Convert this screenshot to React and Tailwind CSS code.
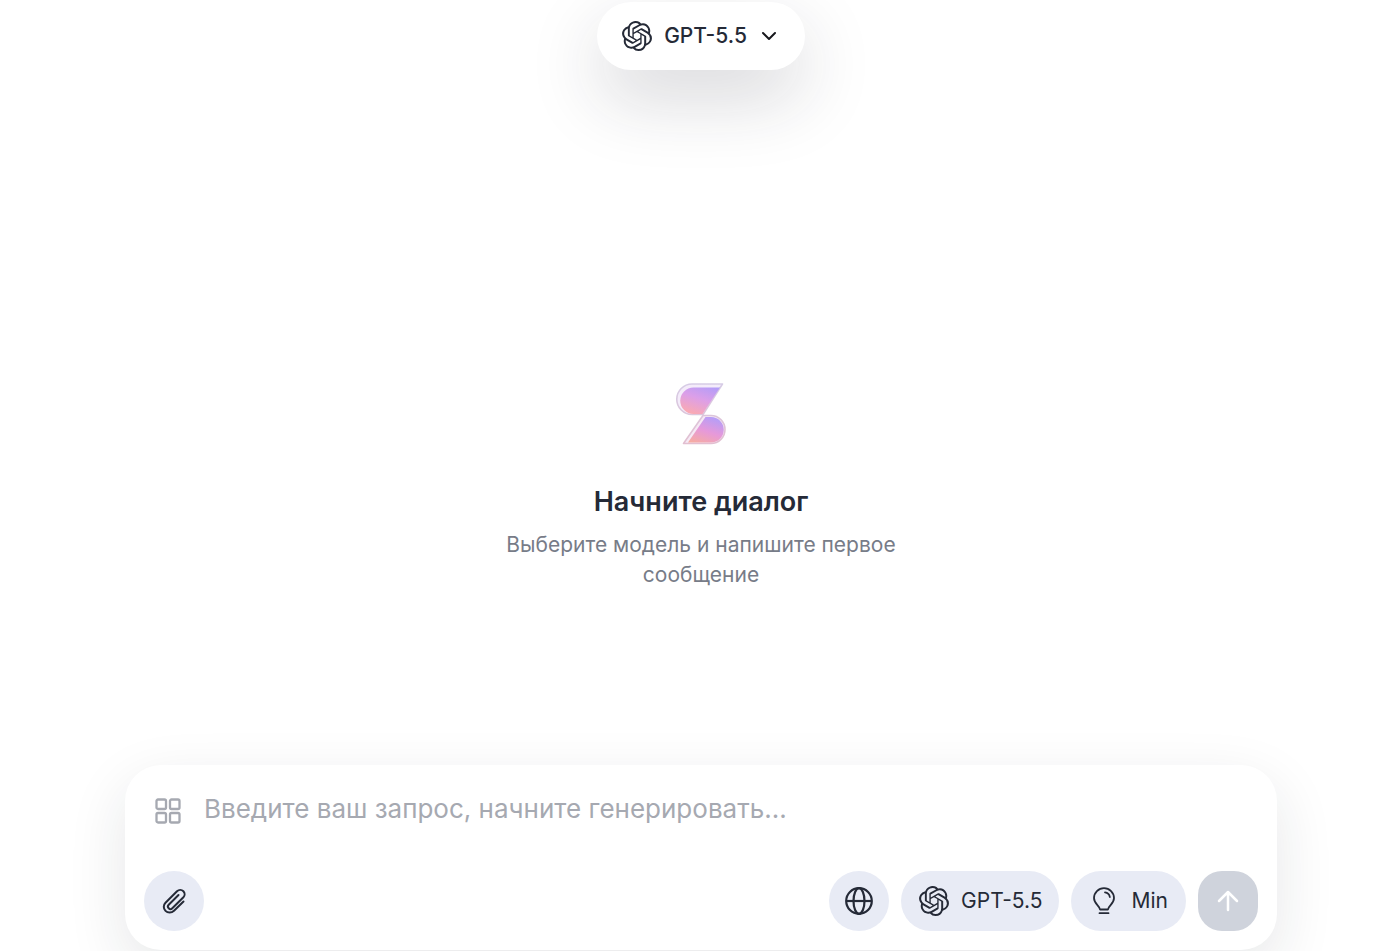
import { SiOpenai } from 'react-icons/si';

function Logo() {
  return (
    <svg viewBox="0 0 52 64" className="h-16 w-[52px]" fill="none" aria-hidden="true">
      <defs>
        <linearGradient id="logo-top" x1="36" y1="3" x2="26" y2="34" gradientUnits="userSpaceOnUse">
          <stop stopColor="#b09cf9" />
          <stop offset="0.5" stopColor="#dc9fe8" />
          <stop offset="1" stopColor="#f9a9b4" />
        </linearGradient>
        <linearGradient id="logo-bottom" x1="36" y1="34" x2="26" y2="64" gradientUnits="userSpaceOnUse">
          <stop stopColor="#b39ef9" />
          <stop offset="0.5" stopColor="#e699da" />
          <stop offset="1" stopColor="#f7ad9f" />
        </linearGradient>
        <linearGradient id="logo-edge" x1="26" y1="0" x2="26" y2="64" gradientUnits="userSpaceOnUse">
          <stop stopColor="#d6cce6" />
          <stop offset="1" stopColor="#e2bfd0" />
        </linearGradient>
      </defs>
      <path d="M47.500 2H17A15 15 0 0 0 17 32.500H28Z" fill="#f4ecfa" stroke="url(#logo-edge)" strokeWidth="1.600" strokeLinejoin="round" />
      <path d="M45 5.500H18.500A13 13 0 0 0 18.500 32H27.500Z" fill="url(#logo-top)" />
      <path d="M28 33.500H36A14 14 0 0 1 36 61.500H8.500Z" fill="#f6e9f5" stroke="url(#logo-edge)" strokeWidth="1.600" strokeLinejoin="round" />
      <path d="M30.500 35H36A12.500 12.500 0 0 1 36 60.500H13Z" fill="url(#logo-bottom)" />
    </svg>
  );
}

function ChevronIcon() {
  return (
    <svg viewBox="0 0 16 10" className="h-[10px] w-4" fill="none" stroke="currentColor" strokeWidth="2" strokeLinecap="round" strokeLinejoin="round" aria-hidden="true">
      <path d="M2 2l6 6 6-6" />
    </svg>
  );
}

function GridIcon() {
  return (
    <svg viewBox="0 0 28 28" className="size-7" fill="none" stroke="currentColor" strokeWidth="2.300" aria-hidden="true">
      <rect x="2.500" y="2.500" width="9.500" height="9.500" rx="1.500" />
      <rect x="16" y="2.500" width="9.500" height="9.500" rx="1.500" />
      <rect x="2.500" y="16" width="9.500" height="9.500" rx="1.500" />
      <rect x="16" y="16" width="9.500" height="9.500" rx="1.500" />
    </svg>
  );
}

function ClipIcon() {
  return (
    <svg viewBox="0 0 24 26" className="h-[26px] w-6" fill="none" stroke="currentColor" strokeWidth="2" strokeLinecap="round" strokeLinejoin="round" aria-hidden="true">
      <path d="M21.500 13.500L12 22.800C9.500 25.200 5.800 25.200 3.500 22.900C1.200 20.600 1.200 17 3.500 14.700L15 3.200C16.800 1.500 19.700 1.500 21.400 3.200C23 4.900 23 7.600 21.400 9.300L10.300 20.300C9.300 21.300 7.700 21.300 6.700 20.300C5.700 19.300 5.700 17.700 6.700 16.700L16.500 7" />
    </svg>
  );
}

function GlobeIcon() {
  return (
    <svg viewBox="0 0 28 28" className="size-7" fill="none" stroke="currentColor" strokeWidth="2.200" aria-hidden="true">
      <circle cx="14" cy="14" r="12.800" />
      <ellipse cx="14" cy="14" rx="5.500" ry="12.800" />
      <path d="M1.200 14h25.600" />
    </svg>
  );
}

function BulbIcon() {
  return (
    <svg viewBox="0 0 24 28" className="h-7 w-6" fill="none" stroke="currentColor" strokeWidth="1.800" strokeLinecap="round" strokeLinejoin="round" aria-hidden="true">
      <path d="M8 22.500C7.500 18.500 2 17 2 11A10 9.800 0 0 1 22 11C22 17 16.500 18.500 16 22.500Z" />
      <path d="M13 5.300A5.500 5.500 0 0 1 17.800 10" />
      <path d="M7.500 26.200h9" />
    </svg>
  );
}

function ArrowIcon() {
  return (
    <svg viewBox="0 0 22 22" className="size-[22px]" fill="none" stroke="currentColor" strokeWidth="2.500" strokeLinecap="round" strokeLinejoin="round" aria-hidden="true">
      <path d="M11 20V2M2 11l9-9 9 9" />
    </svg>
  );
}

function Composer() {
  return (
    <form
      onSubmit={(e) => e.preventDefault()}
      className="w-full max-w-6xl rounded-[36px] bg-white px-[19px] pt-5 pb-[19px] shadow-[0_20px_60px_rgba(31,36,48,0.11)]"
    >
      <div className="flex h-12 items-center gap-[22px] pl-[10px]">
        <button type="button" aria-label="Шаблоны" className="pt-1 text-[#a6a9b1]">
          <GridIcon />
        </button>
        <input
          type="text"
          aria-label="Запрос"
          placeholder="Введите ваш запрос, начните генерировать..."
          className="min-w-0 flex-1 bg-transparent text-[26px] leading-9 outline-none placeholder:text-[#a6a9b1]"
        />
      </div>
      <div className="mt-[38px] flex items-center gap-3">
        <button type="button" aria-label="Прикрепить файл" className="mr-auto flex size-[60px] items-center justify-center rounded-full bg-[#e8ebf5]">
          <ClipIcon />
        </button>
        <button type="button" aria-label="Поиск в интернете" className="flex size-[60px] items-center justify-center rounded-full bg-[#e8ebf5]">
          <GlobeIcon />
        </button>
        <button type="button" className="flex h-[60px] items-center gap-3 rounded-full bg-[#e8ebf5] pr-4 pl-[18px] text-[21px]">
          <SiOpenai className="size-[30px]" />
          GPT-5.5
        </button>
        <button type="button" className="flex h-[60px] items-center gap-4 rounded-full bg-[#e8ebf5] pr-[18px] pl-[21px] text-[21px]">
          <BulbIcon />
          Min
        </button>
        <button type="submit" aria-label="Отправить" className="flex size-[60px] items-center justify-center rounded-3xl bg-[#cfd3dc] text-white">
          <ArrowIcon />
        </button>
      </div>
    </form>
  );
}

export default function App() {
  return (
    <div className="flex min-h-screen flex-col items-center bg-white pt-[2px] pr-0 pb-px pl-[15px] font-['Inter','Noto_Sans',sans-serif] text-[#252a37]">
      <header>
        <button type="button" className="flex h-[68px] items-center gap-3 rounded-full bg-white pr-7 pl-[25px] text-[21px] font-medium shadow-[0_28px_72px_rgba(31,36,48,0.18)]">
          <SiOpenai className="size-[30px]" />
          GPT-5.5
          <span className="ml-[2px] text-[#17181c]">
            <ChevronIcon />
          </span>
        </button>
      </header>
      <main className="flex flex-1 flex-col items-center justify-center pt-[136px] text-center">
        <Logo />
        <h1 className="mt-9 text-[27px] leading-10 font-semibold">Начните диалог</h1>
        <p className="mt-2 w-[420px] text-[21px] leading-[30px] text-[#777c88]">Выберите модель и напишите первое сообщение</p>
      </main>
      <Composer />
    </div>
  );
}
